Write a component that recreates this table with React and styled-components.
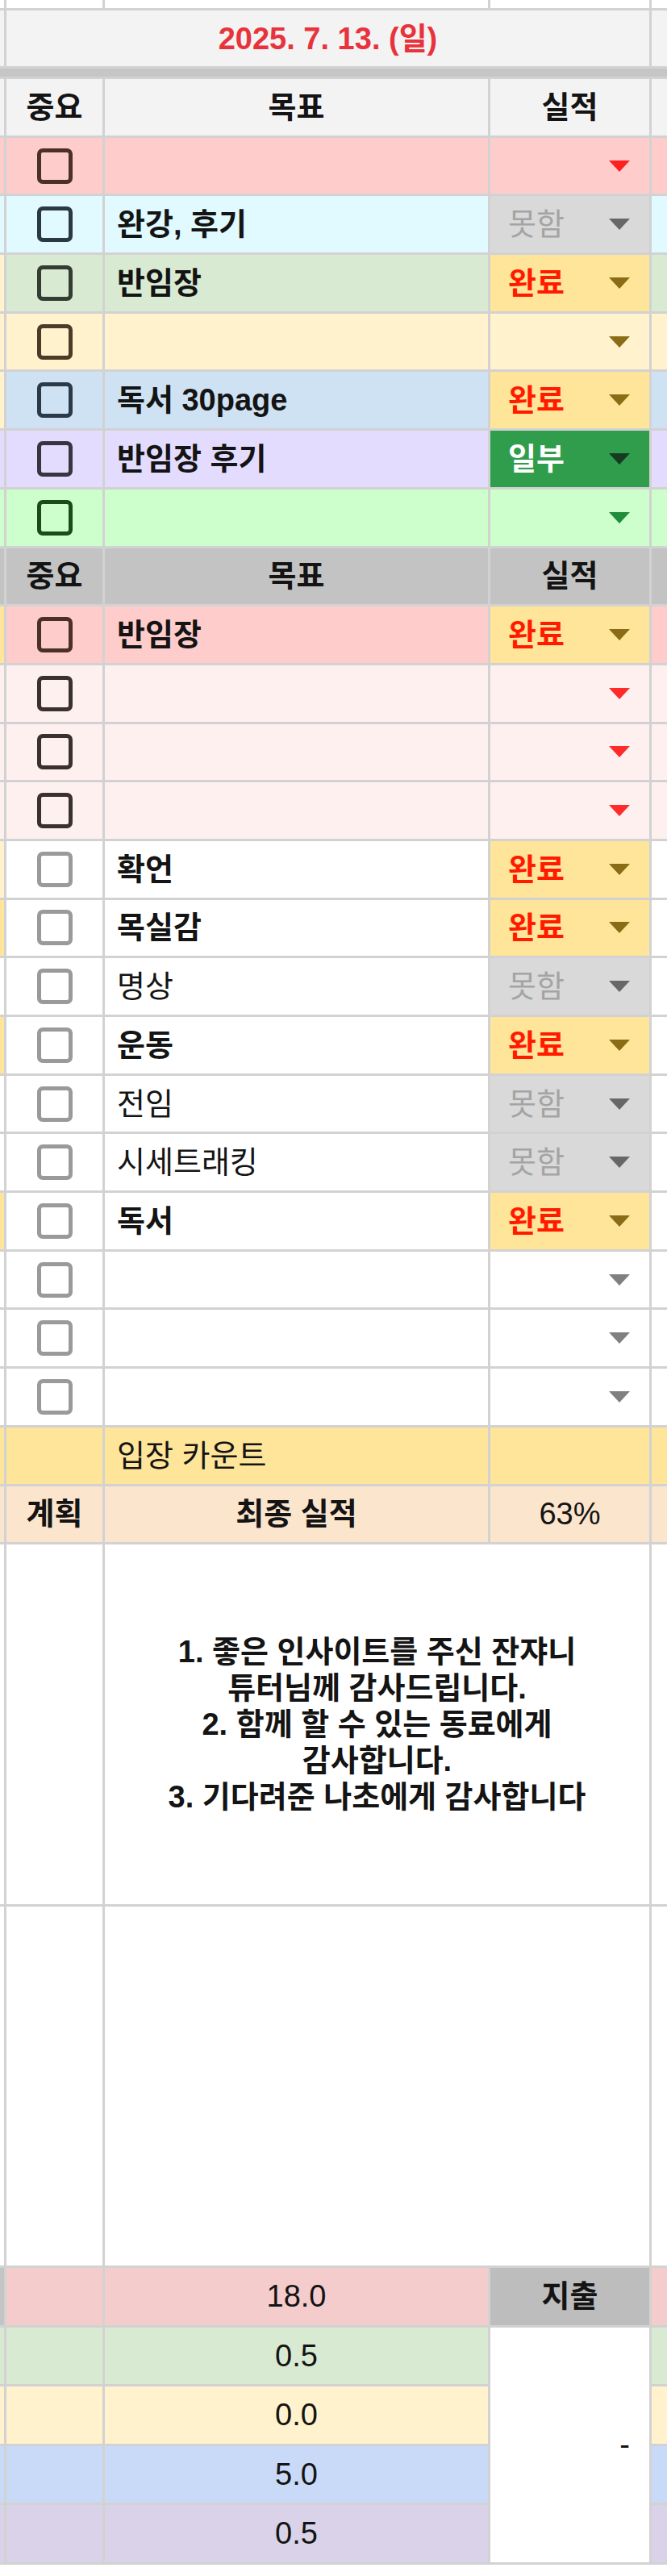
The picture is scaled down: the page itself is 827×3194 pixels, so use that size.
import React from 'react';
import styled, { createGlobalStyle } from 'styled-components';

const GlobalStyle = createGlobalStyle`
    html, body {
        margin: 0;
        padding: 0;
        background: #ffffff;
    }
    body {
        font-family: "Liberation Sans", "Noto Sans CJK KR", sans-serif;
    }
`;

const LINE = '#d2d2d2';
const COLS = '5px 119px 475px 197px 1fr';

const STATUS = {
    못함: { bg: '#d9d9d9', color: '#a4a4a4', arrow: '#676767', bold: false },
    완료: { bg: '#ffe599', color: '#ff1a00', arrow: '#8a6b16', bold: true },
    일부: { bg: '#2f9d4c', color: '#ffffff', arrow: '#163a22', bold: true },
};

const topRows = [
    { bg: '#ffcccc', box: '#4a2f2a', text: '', arrow: '#ff2020' },
    { bg: '#e0faff', box: '#2b3a40', text: '완강, 후기', status: '못함' },
    { bg: '#d9ead3', box: '#333d33', text: '반임장', status: '완료', side: '#fff2cc' },
    { bg: '#fff2cc', box: '#4a3c28', text: '', arrow: '#8a6b16' },
    { bg: '#cfe2f3', box: '#2c3a48', text: '독서 30page', status: '완료', side: '#fff2cc' },
    { bg: '#e4dcff', box: '#3a3440', text: '반임장 후기', status: '일부' },
    { bg: '#ccffcc', box: '#1c4a1c', text: '', arrow: '#1e8c3a' },
];

const lowerRows = [
    { bg: '#ffcccc', box: '#4a2f2a', text: '반임장', status: '완료', side: '#ffe599' },
    { bg: '#fff0f0', box: '#3a3030', text: '', arrow: '#ff2a2a' },
    { bg: '#fff0f0', box: '#3a3030', text: '', arrow: '#ff2a2a' },
    { bg: '#fff0f0', box: '#3a3030', text: '', arrow: '#ff2a2a' },
    { bg: '#ffffff', box: '#9a9a9a', text: '확언', status: '완료', side: '#fff2cc' },
    { bg: '#ffffff', box: '#9a9a9a', text: '목실감', status: '완료', side: '#ffe599' },
    { bg: '#ffffff', box: '#9a9a9a', text: '명상', status: '못함' },
    { bg: '#ffffff', box: '#9a9a9a', text: '운동', status: '완료', side: '#ffe599' },
    { bg: '#ffffff', box: '#9a9a9a', text: '전임', status: '못함' },
    { bg: '#ffffff', box: '#9a9a9a', text: '시세트래킹', status: '못함' },
    { bg: '#ffffff', box: '#9a9a9a', text: '독서', status: '완료', side: '#ffe599' },
    { bg: '#ffffff', box: '#9a9a9a', text: '', arrow: '#808080' },
    { bg: '#ffffff', box: '#9a9a9a', text: '', arrow: '#808080' },
    { bg: '#ffffff', box: '#9a9a9a', text: '', arrow: '#808080' },
];

const totals = [
    { bg: '#f4cccc', side: '#c4c4c4', value: '18.0' },
    { bg: '#d9ead3', value: '0.5' },
    { bg: '#fff2cc', value: '0.0' },
    { bg: '#c9daf8', value: '5.0' },
    { bg: '#d9d2e9', value: '0.5' },
];

const Sheet = styled.div`
    width: 827px;
    display: flex;
    flex-direction: column;
    gap: 3px;
    padding-bottom: 3px;
    background: ${LINE};
`;

const Row = styled.div`
    display: grid;
    grid-template-columns: ${COLS};
    column-gap: 3px;
    height: ${(p) => p.$h || '69.7px'};
`;

const FrozenBar = styled.div`
    height: 10px;
    background: #c6c6c6;
`;

const Cell = styled.div`
    grid-column: ${(p) => p.$col || 'auto'};
    grid-row: ${(p) => p.$row || 'auto'};
    background: ${(p) => p.$bg || '#ffffff'};
    display: flex;
    align-items: center;
    justify-content: ${(p) => p.$align || 'flex-start'};
    padding: ${(p) => p.$pad || '0'};
    color: ${(p) => p.$color || '#141414'};
    font-size: 38px;
    font-weight: ${(p) => (p.$bold ? 700 : 400)};
    line-height: 1;
    white-space: nowrap;
    overflow: hidden;
    min-width: 0;
`;

const DateText = styled.span`
    color: #e8333c;
    font-weight: 700;
    font-size: 38px;
`;

const Checkbox = styled.span`
    width: 34px;
    height: 34px;
    border: 5.5px solid ${(p) => p.$color};
    border-radius: 7px;
`;

const StatusBox = styled(Cell)`
    justify-content: space-between;
    padding: 0 24px 0 22px;
`;

const Note = styled(Cell)`
    white-space: normal;
    text-align: center;
    justify-content: center;
    line-height: 45px;
    font-weight: 700;
    padding: 0 20px;
`;

const TotalsBlock = styled.div`
    display: grid;
    grid-template-columns: ${COLS};
    grid-template-rows: repeat(5, 70.5px);
    gap: 3px;
`;

const Arrow = ({ color }) => (
    <svg width="26" height="14" viewBox="0 0 26 14">
        <path d="M0 0 L26 0 L13 14 Z" fill={color} />
    </svg>
);

const TaskRow = ({ row, bold }) => {
    const st = row.status ? STATUS[row.status] : null;
    return (
        <Row>
            <Cell $bg={row.side || row.bg} />
            <Cell $bg={row.bg} $align="center">
                <Checkbox $color={row.box} />
            </Cell>
            <Cell $bg={row.bg} $pad="0 0 0 15px" $bold={bold}>
                {row.text}
            </Cell>
            <StatusBox $bg={st ? st.bg : row.bg} $color={st ? st.color : '#111'} $bold={st && st.bold}>
                <span>{row.status || ''}</span>
                <Arrow color={st ? st.arrow : row.arrow} />
            </StatusBox>
            <Cell $bg={row.bg} />
        </Row>
    );
};

const HeaderRow = ({ bg }) => (
    <Row>
        <Cell $bg={bg} />
        <Cell $bg={bg} $align="center" $bold>중요</Cell>
        <Cell $bg={bg} $align="center" $bold>목표</Cell>
        <Cell $bg={bg} $align="center" $bold>실적</Cell>
        <Cell $bg={bg} />
    </Row>
);

const App = () => (
    <>
        <GlobalStyle />
        <Sheet>
            <Row $h="10px">
                <Cell />
                <Cell />
                <Cell />
                <Cell />
                <Cell />
            </Row>
            <Row $h="69px">
                <Cell $bg="#f3f3f3" />
                <Cell $bg="#f3f3f3" $col="2 / 5" $align="center">
                    <DateText>2025. 7. 13. (일)</DateText>
                </Cell>
                <Cell $bg="#f3f3f3" />
            </Row>
            <FrozenBar />
            <HeaderRow bg="#f3f3f3" />
            {topRows.map((r, i) => (
                <TaskRow key={'t' + i} row={r} bold />
            ))}
            <HeaderRow bg="#c3c3c3" />
            {lowerRows.map((r, i) => (
                <TaskRow key={'l' + i} row={r} bold={r.status === '완료'} />
            ))}
            <Row>
                <Cell $bg="#ffe599" />
                <Cell $bg="#ffe599" />
                <Cell $bg="#ffe599" $pad="0 0 0 15px">입장 카운트</Cell>
                <Cell $bg="#ffe599" />
                <Cell $bg="#ffe599" />
            </Row>
            <Row>
                <Cell $bg="#fce5cd" />
                <Cell $bg="#fce5cd" $align="center" $bold>계획</Cell>
                <Cell $bg="#fce5cd" $align="center" $bold>최종 실적</Cell>
                <Cell $bg="#fce5cd" $align="center">63%</Cell>
                <Cell $bg="#fce5cd" />
            </Row>
            <Row $h="446px">
                <Cell />
                <Cell />
                <Note $col="span 2">
                    1. 좋은 인사이트를 주신 잔쟈니
                    <br />
                    튜터님께 감사드립니다.
                    <br />
                    2. 함께 할 수 있는 동료에게
                    <br />
                    감사합니다.
                    <br />
                    3. 기다려준 나초에게 감사합니다
                </Note>
                <Cell />
            </Row>
            <Row $h="445px">
                <Cell />
                <Cell />
                <Cell $col="span 2" />
                <Cell />
            </Row>
            <TotalsBlock>
                <Cell $col="4" $row="2 / span 4" $align="flex-end" $pad="0 24px 0 0">-</Cell>
                {totals.map((t, i) => (
                    <React.Fragment key={'s' + i}>
                        <Cell $bg={t.side || t.bg} />
                        <Cell $bg={t.bg} />
                        <Cell $bg={t.bg} $align="center">{t.value}</Cell>
                        {i === 0 && (
                            <Cell $bg="#bdbdbd" $align="center" $bold>지출</Cell>
                        )}
                        <Cell $bg={t.bg} />
                    </React.Fragment>
                ))}
            </TotalsBlock>
        </Sheet>
    </>
);

export default App;
